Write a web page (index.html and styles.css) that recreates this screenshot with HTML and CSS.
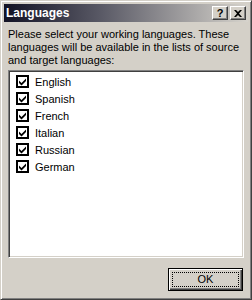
FILE: index.html
```html
<!DOCTYPE html>
<html>
<head>
    <meta charset="UTF-8">
    <title>Languages</title>
    <link rel="stylesheet" href="styles.css">
</head>
<body>

<div class="window">
    <div class="titlebar">
        <span class="title">Languages</span>
        <div class="caption-buttons">
            <span class="cap-btn help">?</span>
            <span class="cap-btn close">
                <svg width="8" height="7" viewBox="0 0 8 7"><path d="M0 0h2l2 2 2-2h2L5 3.5 8 7H6L4 5 2 7H0l3-3.5z" fill="#000"/></svg>
            </span>
        </div>
    </div>
    <div class="content">
        <p class="prompt">Please select your working languages. These languages will be available in the lists of source and target languages:</p>
        <div class="list">
            <label class="item"><span class="check"><svg width="9" height="9" viewBox="0 0 9 9"><path d="M1 3.5l2.5 2.5L8 1.5V4L3.5 8.5 1 6z" fill="#000"/></svg></span>English</label>
            <label class="item"><span class="check"><svg width="9" height="9" viewBox="0 0 9 9"><path d="M1 3.5l2.5 2.5L8 1.5V4L3.5 8.5 1 6z" fill="#000"/></svg></span>Spanish</label>
            <label class="item"><span class="check"><svg width="9" height="9" viewBox="0 0 9 9"><path d="M1 3.5l2.5 2.5L8 1.5V4L3.5 8.5 1 6z" fill="#000"/></svg></span>French</label>
            <label class="item"><span class="check"><svg width="9" height="9" viewBox="0 0 9 9"><path d="M1 3.5l2.5 2.5L8 1.5V4L3.5 8.5 1 6z" fill="#000"/></svg></span>Italian</label>
            <label class="item"><span class="check"><svg width="9" height="9" viewBox="0 0 9 9"><path d="M1 3.5l2.5 2.5L8 1.5V4L3.5 8.5 1 6z" fill="#000"/></svg></span>Russian</label>
            <label class="item"><span class="check"><svg width="9" height="9" viewBox="0 0 9 9"><path d="M1 3.5l2.5 2.5L8 1.5V4L3.5 8.5 1 6z" fill="#000"/></svg></span>German</label>
        </div>
        <div class="actions">
            <button class="ok"><span class="focus">OK</span></button>
        </div>
    </div>
</div>

</body>
</html>
```

FILE: styles.css
```css
* { margin: 0; padding: 0; box-sizing: border-box;}
body { font-family: "Liberation Sans", Arial, sans-serif; font-size: 11px; color: #000; background: #d4d0c8;}
.window { width: 252px; height: 300px; background: #d4d0c8; border: 1px solid; border-color: #d4d0c8 #404040 #404040 #d4d0c8; box-shadow: inset 1px 1px #fff, inset -1px -1px #808080; padding: 3px; display: flex; flex-direction: column;}
.titlebar { height: 18px; display: flex; align-items: center; justify-content: space-between; padding: 0 2px 0 2px; background: linear-gradient(to right, #121224, #5a5a66 40%, #d6d3cc);}
.title { color: #fff; font-weight: bold; font-size: 12px;}
.caption-buttons { display: flex; gap: 2px;}
.cap-btn { width: 16px; height: 14px; background: #d4d0c8; border: 1px solid; border-color: #fff #404040 #404040 #fff; box-shadow: inset -1px -1px #808080; display: flex; align-items: center; justify-content: center; font-weight: bold; font-size: 11px; line-height: 1;}
.content { flex: 1; padding: 6px 4px 5px 4px; display: flex; flex-direction: column;}
.prompt { line-height: 13px; padding-right: 4px;}
.list { margin-top: 3px; height: 188px; background: #fff; border: 1px solid; border-color: #808080 #fff #fff #808080; box-shadow: inset 1px 1px #404040, inset -1px -1px #d4d0c8; padding: 2px 7px; display: flex; flex-direction: column;}
.item { height: 17px; display: flex; align-items: center; gap: 6px;}
.check { width: 13px; height: 13px; border: 2px solid #000; background: #fff; display: flex; align-items: center; justify-content: center;}
.actions { margin-top: auto; display: flex; justify-content: flex-end; padding-right: 1px;}
.ok { width: 75px; height: 23px; background: #d4d0c8; border: 1px solid #000; box-shadow: inset 1px 1px #fff, inset -1px -1px #404040, inset -2px -2px #808080; font: inherit; padding: 3px;}
.focus { display: block; height: 100%; border: 1px dotted #000; line-height: 13px;}
```
